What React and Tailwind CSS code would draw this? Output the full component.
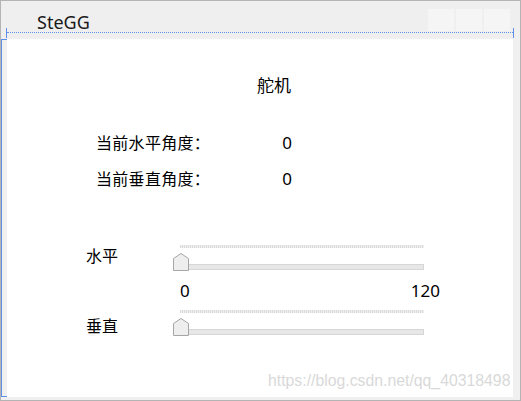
import React from "react";

const cjk = "font-['Noto_Sans','Noto_Sans_CJK_SC',sans-serif]";

function Slider() {
  return (
    <div className="relative w-[251px] h-[26px]">
      <div className="ml-[7px] w-[244px] h-[3px] bg-[repeating-linear-gradient(90deg,#dadada_0_1px,#f0f0f0_1px_2px)]" />
      <div className="absolute left-0 top-[19px] w-[251px] h-[6px] bg-[#e7e7e7] border border-[#d6d6d6]" />
      <svg className="absolute left-0 top-[8px]" width="16" height="18" viewBox="0 0 16 18">
        <polygon points="0.5,5.5 8,0.5 15.5,5.5 15.5,17.5 0.5,17.5" fill="#eeeeee" stroke="#a6a6a6" strokeWidth="1" />
      </svg>
    </div>
  );
}

export default function App() {
  return (
    <div className="relative w-[521px] h-[401px] border border-[#b4b4b4] bg-[#f0f0f0] flex flex-col overflow-hidden text-black">
      <div className="relative h-[38px] bg-[#efefef] flex items-start pl-[36px] pr-[10px]">
        <span className="mt-[12px] text-[18px] leading-[18px] font-['Noto_Sans',sans-serif] text-[#1a1a1a]">SteGG</span>
        <div className="ml-auto mt-[8px] flex gap-[2px]">
          <div className="w-[26px] h-[22px] bg-[#f5f5f5]" />
          <div className="w-[26px] h-[22px] bg-[#f5f5f5]" />
          <div className="w-[26px] h-[22px] bg-[#f5f5f5]" />
        </div>
        <div className="absolute left-[5px] top-[27px] w-[508px] h-[10px] border-x border-[#5f8fe6]">
          <div className="mt-[4px] border-t border-dotted border-[#5f8fe6]" />
        </div>
      </div>
      <div className="flex h-[358px]">
        <div className="w-[6px] bg-[#f0f0f0] border-l border-dotted border-l-[#5f8fe6] border-t border-t-[#5f8fe6] border-b border-b-[#5f8fe6] border-solid" />
        <div className={`w-[506px] bg-white flex flex-col text-[16px] leading-[16px] ${cjk}`}>
          <div className="mt-[39px] pl-[250px] h-[16px] text-[17px]">舵机</div>
          <div className="mt-[41px] w-[285px] pl-[89px] flex justify-between h-[16px]">
            <span className="tracking-[0.3px]">当前水平角度：</span>
            <span className="text-[17px]">0</span>
          </div>
          <div className="mt-[20px] w-[285px] pl-[89px] flex justify-between h-[16px]">
            <span className="tracking-[0.3px]">当前垂直角度：</span>
            <span className="text-[17px]">0</span>
          </div>
          <div className="mt-[58px] flex items-start">
            <span className="ml-[79px] w-[87px] mt-[3px] h-[16px]">水平</span>
            <Slider />
          </div>
          <div className="mt-[11px] w-[433px] pl-[173px] flex justify-between text-[17px] leading-[17px] h-[17px]">
            <span>0</span>
            <span>120</span>
          </div>
          <div className="mt-[11px] flex items-start">
            <span className="ml-[79px] w-[87px] mt-[8px] h-[16px]">垂直</span>
            <Slider />
          </div>
        </div>
        <div className="w-[7px] bg-[#f0f0f0]" />
      </div>
      <div className="flex-1 bg-[#f0f0f0]" />
      <div className="absolute left-[267px] top-[372px] text-[15.8px] leading-[16px] font-['Liberation_Sans',sans-serif] text-[#d9d9d9]">
        https://blog.csdn.net/qq_40318498
      </div>
    </div>
  );
}
